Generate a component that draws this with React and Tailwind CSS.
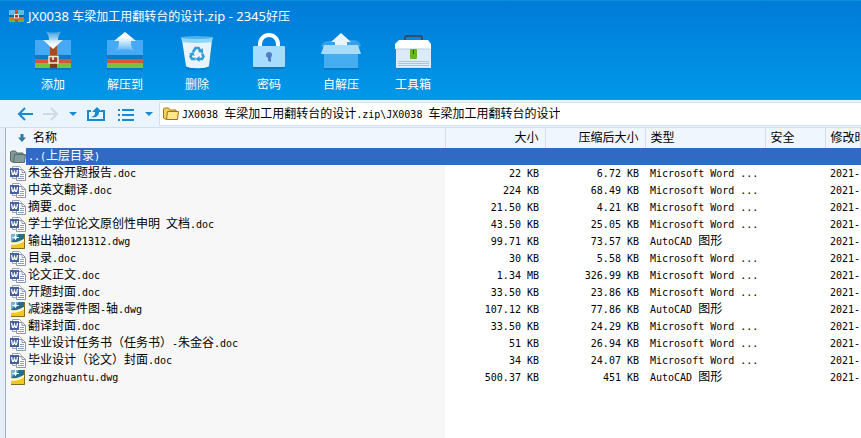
import React from 'react';

const files = [
  ['doc', '朱金谷开题报告.doc', '22 KB', '6.72 KB'],
  ['doc', '中英文翻译.doc', '224 KB', '68.49 KB'],
  ['doc', '摘要.doc', '21.50 KB', '4.21 KB'],
  ['doc', '学士学位论文原创性申明 文档.doc', '43.50 KB', '25.05 KB'],
  ['dwg', '输出轴0121312.dwg', '99.71 KB', '73.57 KB'],
  ['doc', '目录.doc', '30 KB', '5.58 KB'],
  ['doc', '论文正文.doc', '1.34 MB', '326.99 KB'],
  ['doc', '开题封面.doc', '33.50 KB', '23.86 KB'],
  ['dwg', '减速器零件图-轴.dwg', '107.12 KB', '77.86 KB'],
  ['doc', '翻译封面.doc', '33.50 KB', '24.29 KB'],
  ['doc', '毕业设计任务书（任务书）-朱金谷.doc', '51 KB', '26.94 KB'],
  ['doc', '毕业设计（论文）封面.doc', '34 KB', '24.07 KB'],
  ['dwg', 'zongzhuantu.dwg', '500.37 KB', '451 KB'],
];

/* Sets the half-width characters in a size of their own. In lists they are
   small enough for two of them to fill one full-width cell. */
function Mixed({ children, latin = 'text-[10px]' }) {
  return children
    .split(/([\x20-\x7e]+)/)
    .filter(Boolean)
    .map((part, i) =>
      /^[\x20-\x7e]/.test(part) ? (
        <span key={i} className={'whitespace-pre ' + latin}>{part}</span>
      ) : (
        part
      )
    );
}

function ArchiveBase() {
  return (
    <>
      <rect x="3" y="37" width="36" height="2" fill="#0565a8" opacity=".5" />
      <path d="M3 9h36v16H3z" fill="#45aaf3" />
      <path d="M3 24h36v5H3z" fill="#0b7ac4" />
      <path d="M3 28h36v5H3z" fill="#d2573d" />
      <path d="M3 32h36v5H3z" fill="#7ac23c" />
    </>
  );
}

function AddIcon() {
  return (
    <svg width="42" height="40" viewBox="0 0 42 40" aria-hidden="true">
      <defs>
        <linearGradient id="down" x1="0" y1="0" x2="0" y2="1">
          <stop offset="0" stopColor="#fff" stopOpacity=".2" />
          <stop offset=".8" stopColor="#fff" />
        </linearGradient>
      </defs>
      <ArchiveBase />
      <path d="M18 14h7v23h-7z" fill="#a84b22" />
      <path d="M18 28h7v9h-7z" fill="#84381e" />
      <path d="M17 25.500h9v6.500h-9z" fill="#9b422a" stroke="#f5e9d6" strokeWidth="1.5" />
      <path d="M21 26v3" stroke="#fff" strokeWidth="1.500" />
      <path d="M13 0c5 2 12 2 17 0-3 3-4 5-4 9h5L21 18 11 9h6c0-4-1-6-4-9z" fill="url(#down)" />
    </svg>
  );
}

function ExtractIcon() {
  return (
    <svg width="42" height="40" viewBox="0 0 42 40" aria-hidden="true">
      <defs>
        <linearGradient id="up" x1="0" y1="0" x2="0" y2="1">
          <stop offset=".3" stopColor="#fff" />
          <stop offset="1" stopColor="#fff" stopOpacity=".1" />
        </linearGradient>
      </defs>
      <ArchiveBase />
      <path d="M21 1l11 9h-5c0 5 1 8 4 10-6-2-14-2-20 0 3-2 4-5 4-10h-5z" fill="url(#up)" />
    </svg>
  );
}

function DeleteIcon() {
  return (
    <svg width="42" height="40" viewBox="0 0 42 40" aria-hidden="true">
      <path d="M9 35h24l-2 4H11z" fill="#0565a8" opacity=".4" />
      <path d="M6 9h30l-3 26c-1 3-22 3-23 0z" fill="#e8f4fa" />
      <path d="M5 6h32l-1 5q-15 2-30 0z" fill="#8fd6f6" />
      <ellipse cx="21" cy="6.500" rx="16" ry="1.500" fill="#4eb2e9" />
      <g fill="none" stroke="#2e9cda" strokeWidth="2.500">
        <path d="M17 21l2.500-4h3l2 3" />
        <path d="M26 22.500l1.500 3-1.500 2.500h-3" />
        <path d="M19.500 28H16l-1.500-2.500 1.500-3" />
      </g>
      <path d="M22 21l5 1V17zM23.500 25v6l-4-3zM13 22.500l4.500-1.500 1 4z" fill="#2e9cda" />
    </svg>
  );
}

function LockIcon() {
  return (
    <svg width="42" height="40" viewBox="0 0 42 40" aria-hidden="true">
      <path d="M5 36h32v2H5z" fill="#0567ab" opacity=".5" />
      <path d="M12 16v-3a9 9 0 0 1 18 0v3" fill="none" stroke="#fff" strokeWidth="4" />
      <rect x="5" y="15" width="32" height="21" rx="1" fill="#a5dcff" />
      <circle cx="21" cy="24" r="3" fill="#527fc4" />
      <path d="M20 25h3v6l-3-1z" fill="#527fc4" />
    </svg>
  );
}

function SfxIcon() {
  return (
    <svg width="42" height="40" viewBox="0 0 42 40" aria-hidden="true">
      <path d="M4 37h35v2H4z" fill="#0567ab" opacity=".5" />
      <path d="M1 15q2-5 8-5l24-1q7 0 8 6l-5 3H6z" fill="#36a0e8" />
      <path d="M21 2l10 9h-4v6H15v-6h-4z" fill="#e9f6ff" />
      <path d="M4 20h34v17H4z" fill="#47adf1" />
      <path d="M4 14h34l3 9H1z" fill="#a7dcfb" />
    </svg>
  );
}

function ToolboxIcon() {
  return (
    <svg width="42" height="40" viewBox="0 0 42 40" aria-hidden="true">
      <path d="M4 36h35v2H4z" fill="#0567ab" opacity=".5" />
      <path d="M13 10V7q0-2 2-2h13q2 0 2 2v3" fill="none" stroke="#344f65" strokeWidth="2" />
      <path d="M4 14h35v23H4z" fill="#dcebf7" />
      <path d="M7 9h29l3 4v5H3v-5z" fill="#fff" />
      <path d="M4 18h34" stroke="#b7ccdc" />
      <path d="M6 30.500h31M6 32.500h31M6 34.500h31" stroke="#b3c3d2" />
      <rect x="18" y="18" width="7" height="10" rx="1" fill="#68b522" />
      <path d="M21 19h1v4h-1z" fill="#285c12" />
    </svg>
  );
}

function LogoIcon() {
  return (
    <svg width="16" height="16" viewBox="0 0 16 16" aria-hidden="true">
      <path d="M1 2h15v6H1z" fill="#5cbcf0" />
      <path d="M1 7h15v2H1z" fill="#17649f" />
      <path d="M1 9h15v3H1z" fill="#df6b44" />
      <path d="M1 12h15v2H1z" fill="#74b52f" />
      <path d="M7 1h3v13H7z" fill="#af5930" />
      <path d="M6.500 6.500h4v3.500h-4z" fill="#9b3b2c" stroke="#f8e8d6" />
    </svg>
  );
}

function WordIcon() {
  return (
    <svg width="16" height="17" viewBox="0 0 16 17" aria-hidden="true">
      <path d="M2.500 1.500h7l2 2v10h-9z" fill="#fff" stroke="#9aa4b6" />
      <path d="M6.500 4.500h6l3 3v8h-9z" fill="#fff" stroke="#8c97aa" />
      <path d="M12 4.500v3h3" fill="none" stroke="#8c97aa" />
      <path d="M10 9.500h4M10 11.500h4M8 13.500h6" stroke="#8c9dbc" />
      <path d="M0 3h9v9H0z" fill="#43609f" />
      <path d="M1.500 5l1 4.500h1l1-3 1 3h1l1-4.500" fill="none" stroke="#fff" strokeWidth="1.200" />
    </svg>
  );
}

function DwgIcon() {
  return (
    <svg width="16" height="17" viewBox="0 0 16 17" aria-hidden="true">
      <path d="M1 1h14v15H1z" fill="#2c6a8d" />
      <path d="M1 1h8L1 9z" fill="#77b4d0" />
      <path d="M1 10q7 1 14-3v9H1z" fill="#f2c81f" />
      <path d="M1 9q8 1 14-4v3q-6 4-14 4z" fill="#fff6c5" />
      <path d="M5.500 1v6M2 4.500h7" stroke="#d8effa" />
      <circle cx="5.500" cy="4.500" r="1.500" fill="#fff" />
      <path d="M1 15.500h13.500V1" fill="none" stroke="#846c22" />
    </svg>
  );
}

function FolderIcon({ dim }) {
  const edge = dim ? '#526d72' : '#a17318';
  return (
    <svg width="16" height="16" viewBox="0 0 16 16" aria-hidden="true">
      <path d="M.5 12V3l1-1h4l1.500 2H13v8l-1 1H2z" fill={dim ? '#829998' : '#f4cf5a'} stroke={edge} />
      <path d="M4.500 5.500h11l-1 8h-11z" fill={dim ? '#849b99' : '#ffe587'} stroke={edge} />
    </svg>
  );
}

const tools = [
  ['添加', AddIcon],
  ['解压到', ExtractIcon],
  ['删除', DeleteIcon],
  ['密码', LockIcon],
  ['自解压', SfxIcon],
  ['工具箱', ToolboxIcon],
];

function Caret() {
  return (
    <svg width="8" height="4" viewBox="0 0 8 4" aria-hidden="true">
      <path d="M0 0h8L4 4z" fill="#168ad2" />
    </svg>
  );
}

function NavBar() {
  return (
    <nav className="flex h-7 items-center border-b border-[#cfdfeb] bg-[#e9f4fc] pl-[17px]">
      <button type="button" aria-label="后退">
        <svg width="16" height="16" viewBox="0 0 16 16" fill="none" stroke="#168ad2" strokeWidth="2" aria-hidden="true">
          <path d="M8 2L2 8l6 6M2 8h14" />
        </svg>
      </button>
      <button type="button" aria-label="前进" className="ml-2.5">
        <svg width="16" height="16" viewBox="0 0 16 16" fill="none" stroke="#d2d9df" strokeWidth="2" aria-hidden="true">
          <path d="M8 2l6 6-6 6M14 8H0" />
        </svg>
      </button>
      <button type="button" aria-label="历史" className="ml-2.5 flex h-4 items-center"><Caret /></button>
      <button type="button" aria-label="向上" className="ml-2.5">
        <svg width="18" height="16" viewBox="0 0 18 16" aria-hidden="true">
          <path d="M4 5H1v9h16V5h-3" fill="none" stroke="#168ad2" strokeWidth="2" />
          <path d="M4 11c4-1 4-3 4-5H5l5-5 5 5h-3c0 4-3 6-8 5z" fill="#168ad2" />
        </svg>
      </button>
      <button type="button" aria-label="视图" className="ml-[13px]">
        <svg width="16" height="16" viewBox="0 0 16 16" stroke="#168ad2" strokeWidth="2" aria-hidden="true">
          <path d="M0 4h2M4 4h12M0 9h2M4 9h12M0 14h2M4 14h12" />
        </svg>
      </button>
      <button type="button" aria-label="视图选项" className="ml-[11px] flex h-4 items-center"><Caret /></button>
      <div className="ml-1.5 flex h-6 min-w-0 flex-1 items-center border border-r-0 border-[#d3e0eb] bg-white pl-[3px]">
        <FolderIcon />
        <button type="button" className="ml-[3px] truncate pt-0.5 text-left">
          <Mixed>{'JX0038 车梁加工用翻转台的设计.zip\\JX0038 车梁加工用翻转台的设计'}</Mixed>
        </button>
      </div>
    </nav>
  );
}

function NameCell({ icon, name, selected }) {
  return (
    <td className="p-0">
      <div className="flex h-[17px] items-center">
        <span className="flex h-[17px] w-5 shrink-0 items-center bg-[#f7f7f7] pl-1">{icon}</span>
        <span className={selected ? 'flex-1 bg-[#316ac5] pl-0.5 text-white' : 'flex-1 pl-0.5'}>
          <Mixed>{name}</Mixed>
        </span>
      </div>
    </td>
  );
}

export default function App() {
  return (
    <div className="flex min-h-screen flex-col overflow-hidden bg-white font-['DejaVu_Sans_Mono','Noto_Sans_CJK_SC',monospace] text-xs leading-[17px] text-black">
      <header className="h-[100px] border-t border-[#0593dc] bg-linear-to-b from-[#007bd8] to-[#0098e8] font-['Noto_Sans','Noto_Sans_CJK_SC',sans-serif] text-white">
        <div className="flex h-[30px] items-center gap-1 pl-2">
          <LogoIcon />
          <h1 className="whitespace-nowrap">
            <Mixed latin="text-[13px]">JX0038 车梁加工用翻转台的设计.zip - 2345好压</Mixed>
          </h1>
        </div>
        <div className="flex pl-[17px]">
          {tools.map(([label, Icon]) => (
            <button key={label} type="button" className="flex w-[72px] flex-col items-center gap-[5px]">
              <Icon />
              <span>{label}</span>
            </button>
          ))}
        </div>
      </header>
      <NavBar />
      <main className="flex flex-1 bg-[#e6eef7] pl-[5px]">
        <div className="min-w-0 flex-1 overflow-hidden border-l border-[#9eafc6] bg-[linear-gradient(to_right,#f7f7f7_439px,#ffffff_439px)]">
          <table className="w-full table-fixed border-collapse whitespace-nowrap">
            <colgroup>
              <col className="w-[439px]" />
              <col className="w-[100px]" />
              <col className="w-[100px]" />
              <col className="w-[120px]" />
              <col className="w-[60px]" />
              <col />
            </colgroup>
            <thead>
              <tr className="h-5 bg-[#eff6fe] text-left *:border-r *:border-[#d3dfea] *:py-0 *:font-normal">
                <th className="px-3">
                  <span className="flex items-center gap-[7px]">
                    <svg width="8" height="8" viewBox="0 0 8 8" aria-hidden="true">
                      <path d="M2.500 0h3v3.500H8L4 8 0 3.500h2.500z" fill="#287aab" />
                    </svg>
                    名称
                  </span>
                </th>
                <th className="pr-1.5 text-right">大小</th>
                <th className="pr-1.5 text-right">压缩后大小</th>
                <th className="pl-[5px]">类型</th>
                <th className="pl-[5px]">安全</th>
                <th className="overflow-hidden pl-[5px]">修改时间</th>
              </tr>
            </thead>
            <tbody>
              <tr className="h-[17px] bg-[#316ac5]">
                <NameCell icon={<FolderIcon dim />} name="..(上层目录)" selected />
                <td colSpan={5} className="p-0" />
              </tr>
              {files.map(([kind, name, size, packed]) => (
                <tr key={name} className="h-[17px]">
                  <NameCell icon={kind === 'doc' ? <WordIcon /> : <DwgIcon />} name={name} />
                  <td className="py-0 pr-1.5 text-right"><Mixed>{size}</Mixed></td>
                  <td className="py-0 pr-1.5 text-right"><Mixed>{packed}</Mixed></td>
                  <td className="py-0 pl-[5px]"><Mixed>{kind === 'doc' ? 'Microsoft Word ...' : 'AutoCAD 图形'}</Mixed></td>
                  <td />
                  <td className="py-0 pl-[5px]"><Mixed>2021-</Mixed></td>
                </tr>
              ))}
            </tbody>
          </table>
        </div>
      </main>
    </div>
  );
}
